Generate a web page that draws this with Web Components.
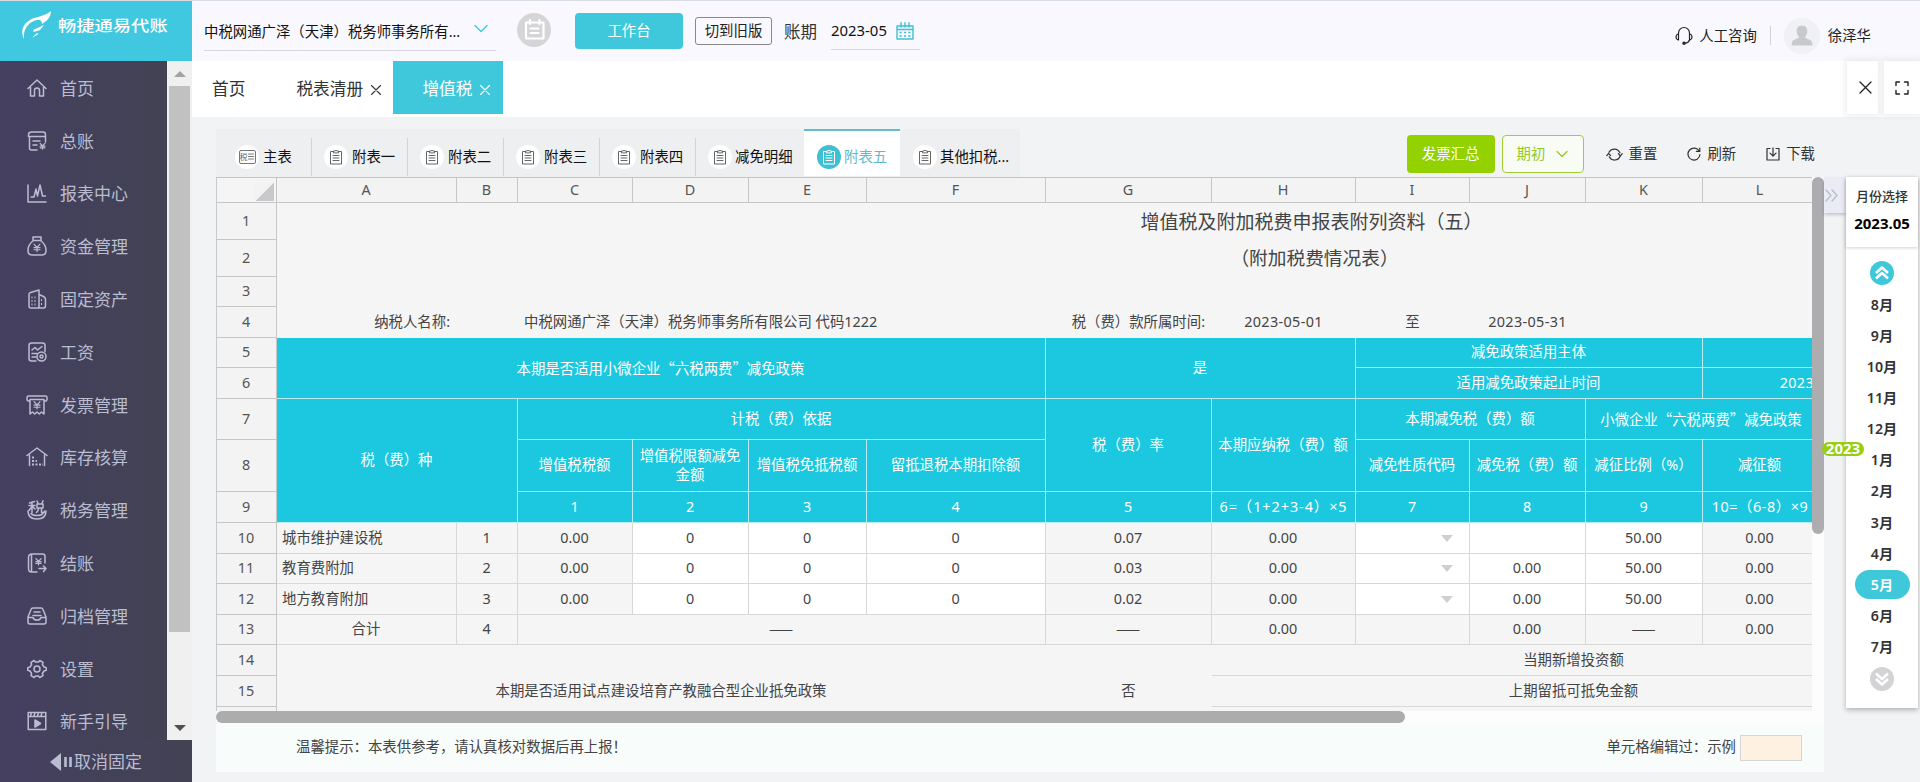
<!DOCTYPE html>
<html lang="zh-CN">
<head>
<meta charset="utf-8">
<title>畅捷通易代账</title>
<style>
html,body{margin:0;padding:0}
body{width:1920px;height:782px;overflow:hidden;background:#f2f3f5;font-family:"Noto Sans","Noto Sans CJK SC",sans-serif;font-size:14.4px;line-height:20px;color:#333}
</style>
</head>
<body>
<tax-app></tax-app>
<script>
const svg=(w,h,inner,vb)=>`<svg width="${w}" height="${h}" viewBox="${vb||`0 0 ${w} ${h}`}" fill="none" stroke="currentColor" stroke-width="1.5" stroke-linecap="round" stroke-linejoin="round">${inner}</svg>`;
const yen=(x,y,s)=>`<path d="M${x-s} ${y-s*1.1}l${s} ${s*1.1}l${s} ${-s*1.1}M${x} ${y}v${s*1.3}M${x-s} ${y+.2}h${2*s}M${x-s} ${y+s*.75}h${2*s}" stroke-width="1.2"/>`;
const ICONS={
 home:svg(20,20,'<path d="M1 10.5L10 2l9 8.5M3.5 9v9h4v-5.500a2.500 2.500 0 0 1 5 0V18h4V9"/>'),
 ledger:svg(20,20,'<path d="M18.500 11V3.500q0-2.500-2.500-2.500H5Q1.500 1 1.500 3.500V5.500h17M2.500 5.500V17q0 2 2 2h5.500M6 10h7M6 14h4"/>'+yen(15.5,15,2.4)),
 chart:svg(20,20,'<path d="M1 2v17h18M4 14h3l2-8 1.500 7L13 2l2.500 11h3"/>'),
 money:svg(20,20,'<path d="M6 1h8v3.500H6zM6.500 4.500C3 7 1 10 1 14.500q0 4.500 4 4.500h10q4 0 4-4.500C19 10 17 7 13.500 4.500"/>'+yen(10,11.5,3)),
 asset:svg(20,20,'<path d="M2 17V5.500Q2 4 3.500 3.500L12 1v18H4q-2 0-2-2zM12 5.500l4.500 2q2 1 2 3V17q0 2-2 2H12"/><path d="M4.500 8.500h6M4.500 12h6M4.500 15.500h6M14 11h3M14 15h3" stroke-dasharray="1 2" stroke-width="1.900" stroke-linecap="butt"/>'),
 wage:svg(20,20,'<path d="M18 9.500V3.500q0-2.500-2.500-2.500h-11Q2 1 2 3.500v13Q2 19 4.500 19H9M5 8l3-2.500L10.500 8 15 4.500M5 11.500h5M5 15h4"/><circle cx="14.500" cy="14.500" r="4.500"/><circle cx="14.500" cy="14.500" r="1.500"/>'),
 invoice:svg(22,20,'<path d="M4 6H2.500q-1.500 0-1.500-1.500v-2Q1 1 2.500 1h17q1.500 0 1.500 1.500v2Q21 6 19.500 6H18M4 4.500h14V19l-2.500-2-2.200 2-2.300-2-2.300 2-2.200-2L4 19z"/>'+yen(11,10,3)),
 stock:svg(22,20,'<path d="M1 8.500L11 1l10 7.500M3.500 8v10.500M18.500 8v10.500"/><path d="M6 10.500h2M6 14h5M6 17.500h11" stroke-dasharray="2 1.500" stroke-width="2" stroke-linecap="butt"/>'),
 tax:svg(20,20,'<path d="M1 11q0 8 9 8t9-8M4 13.500q1.500 2 6 2t6-2"/><path d="M2.500 3l5-1.500M5 2.500v10M2 5.500h6M5 6.500l-3 4M5.500 6.500L8 9M10 1l1 2M16 .800l-1 2.500M10 4h6v4h-6zM11.500 8q0 3-2 4.500M14.500 8v4.500h3V11" stroke-width="1.500"/>'),
 close:svg(20,20,'<path d="M18 10V3.500q0-2.500-2.500-2.500H5Q1.500 1 1.500 4.500v11Q1.500 19 4.500 19H10M4.500 1.500v17M12 15.500h7l-2.500-2.500M19 15.500L16.500 18.500"/>'+yen(11.5,8.5,2.600)),
 archive:svg(20,18,'<path d="M1 10L4 2.500Q4.500 1 6 1h8q1.500 0 2 1.500L19 10v5q0 2-2 2H3q-2 0-2-2zM1 10.500h5q.500 2.500 4 2.500t4-2.500h5M7 5h6M6 8.500h8"/>'),
 gear:svg(20,20,'<path d="M7.200 1.500L8.500 3h3l1.300-1.500 3.200 1.800-.600 2.200 1.600 2.500 2.300.700v2.600l-2.300.700-1.600 2.500.600 2.200-3.200 1.800-1.300-1.500h-3l-1.300 1.500L4 16.700l.600-2.200L3 12l-2.300-.700V8.700L3 8l1.600-2.500L4 3.300z"/><circle cx="10" cy="10" r="3"/>'),
 guide:svg(20,20,'<path d="M1.200 1.500h17.600v17H1.200zM1.200 5.500h17.600M4.500 1.500L3.500 5M8 1.500L7 5M11.500 1.500l-1 3.500M15 1.500L14 5"/><path d="M8 9l5.500 3.500L8 16z" fill="currentColor"/>'),
 clip:svg(14,16,'<path d="M4 2.500H1.500V15h11V2.500H10M4.500 3.500V2H6q1-1.800 2 0h1.500v1.500zM4 6.500h6M4 9h6M4 11.500h6" stroke-width="1"/>'),
 x:svg(10,10,'<path d="M.500.500l9 9M9.500.500l-9 9" stroke-width="1.100"/>'),
 chev:svg(14,10,'<path d="M1 1.500l6 6 6-6" stroke-width="1.300"/>'),
 chevs:svg(12,9,'<path d="M1 1.500l5 5 5-5" stroke-width="1.200"/>'),
 board:svg(34,34,'<circle cx="17" cy="17" r="17" fill="#d5d5d8" stroke="none"/><path d="M9 9.500h17.500v16H9zM13 7v4M22.500 7v4M13.500 15.500h8M13.500 20h8" stroke="#fff" stroke-width="2.200"/>'),
 cal:svg(18,18,'<path d="M1 4h16v13H1zM1 7.500h16M5 .800V5M9 .800V5M13 .800V5" stroke-width="1.400"/><path d="M3.500 10.500h11M3.500 14h11" stroke-width="1.700" stroke-dasharray="2.200 2.200" stroke-linecap="butt"/>'),
 head:svg(18,19,'<path d="M3.500 8V7a5.500 5.500 0 0 1 11 0v7q-1 3-4.500 3.200M3.500 8H3q-2 .500-2 3t2 3h.500zM14.500 8h.500q2 .500 2 3t-2 3h-.500z" stroke-width="1.200"/><circle cx="9" cy="17.200" r="1"/>'),
 full:svg(14,14,'<path d="M1 4.500V1h3.500M9.500 1H13v3.500M13 9.500V13H9.500M4.500 13H1V9.500" stroke-width="1.400"/>'),
 reset:svg(17,15,'<path d="M3 5.300a6 6 0 0 1 10.900.500M14.200 9a6 6 0 0 1-11 .800M.800 8.600L2.600 6.300l2 2.300M12.400 6.700l2 2.300 1.800-2.300" stroke-width="1.200"/>'),
 refresh:svg(14,14,'<path d="M12.300 4.200A6 6 0 1 0 13 7.500M12.800 1v3.400H9.400" stroke-width="1.200"/>'),
 down:svg(14,14,'<path d="M4 1.500H1V13h12V1.500h-3M7 .800V9M4 6.200l3 3 3-3" stroke-width="1.200"/>')
};
class Base extends HTMLElement{
 constructor(){super();this.attachShadow({mode:'open'})}
 connectedCallback(){this.shadowRoot.innerHTML=`<style>*{box-sizing:border-box}svg{display:block;flex:none}${this.css()}</style>${this.html()}`}
 css(){return ''} html(){return ''}
}
const def=(n,css,html)=>customElements.define(n,class extends Base{css(){return typeof css==='function'?css(this):css}html(){return typeof html==='function'?html(this):html}});

def('ui-icon',':host{display:flex;align-items:center;justify-content:center}',e=>ICONS[e.getAttribute('name')]);

def('menu-item',`:host{display:flex;align-items:center;height:52.800px;padding:1px 0 0 26px;font-size:17px;color:#babdd1}ui-icon{width:22px;margin:-2px 12px 0 0}`,
 e=>`<ui-icon name="${e.getAttribute('icon')}"></ui-icon><slot></slot>`);

def('side-bar',`:host{display:flex;flex-direction:column;width:192px;height:782px;color:#babdd1}
.logo{height:61px;background:#3fc8e0;color:#fff;display:flex;padding:10px 0 0 21px;border-top:1px solid #d8dce4}
.logo span{font-size:18.300px;line-height:28px;height:28px;margin-left:6px;white-space:nowrap;transform:scaleY(.83);font-weight:500}
.mid{display:flex;height:679px;background:#f0f0f0}
.menu{width:167px;overflow:hidden;padding-top:1px;background:linear-gradient(90deg,#453f60,#43415a 50%,#424253)}
.bar{width:25px;display:flex;flex-direction:column;align-items:center}
.up,.dn{height:25px;display:flex;align-items:center}
.up:before,.dn:before{content:"";border:6px solid transparent;border-top:0;border-bottom:6px solid #a3a3a3}
.dn:before{border-top:6px solid #505050;border-bottom:0}
.thumb{width:21px;height:546px;background:#c1c1c1;margin-bottom:83px}
.foot{height:42px;background:linear-gradient(90deg,#453f60,#43415a 50%,#424253);display:flex;align-items:center;padding:2px 0 0 50px;font-size:17px}`,
`<div class="logo">${svg(31,31,'<path d="M3 28C-3 16 7 8 17 6 24 4 28 2 30 0c0 6-4 10-9 13 0-3-2-5-5-4C8 11 2 17 3 28zM12 19l11-5-4 5-6 2zM11 27l5-5 1.500 1z" fill="#fff" stroke="none"/>')}<span>畅捷通易代账</span></div>
<div class="mid"><div class="menu">${[['home','首页'],['ledger','总账'],['chart','报表中心'],['money','资金管理'],['asset','固定资产'],['wage','工资'],['invoice','发票管理'],['stock','库存核算'],['tax','税务管理'],['close','结账'],['archive','归档管理'],['gear','设置'],['guide','新手引导']].map(a=>`<menu-item icon="${a[0]}">${a[1]}</menu-item>`).join('')}</div>
<div class="bar"><div class="up"></div><div class="thumb"></div><div class="dn"></div></div></div>
<div class="foot">${svg(24,18,'<path d="M0 9L11 0v18z" fill="currentColor" stroke="none"/><path d="M15.500 4v10M20.500 4v10" stroke-width="2.600" stroke-linecap="butt"/>')}取消固定</div>`);

def('top-bar',`:host{display:flex;height:61px;background:#f8f8fe;border-top:1px solid #d8dce4;color:#222;padding:0 49px 0 12px}
.co{width:292px;height:50px;border-bottom:1px solid #d5d8dd;display:flex;align-items:center;padding:13px 8px 0 0;justify-content:space-between;white-space:nowrap;color:#111}
.co ui-icon{color:#3fc8e0;margin-top:-7px}
.board{margin:0 0 0 21px;height:58px}
.work{width:108px;height:36px;margin:12px 0 0 24px;border-radius:4px;background:#3fc8dc;color:#fff;text-align:center;line-height:35px}
.old{width:77px;height:28px;margin:16px 0 0 12px;border:1px solid #888;border-radius:3px;text-align:center;line-height:25px}
.lab{font-size:16.500px;margin:21px 0 0 12px;width:47px;color:#333}
.date{width:89px;height:49px;border-bottom:1px solid #d5d8dd;display:flex;padding:19px 6px 0 0;justify-content:space-between;font-size:14.900px;color:#111}
.date ui-icon{color:#3fc0d2;height:21px}
.r{margin-left:auto;display:flex;align-items:center;height:69px}
.r .l{width:1px;height:19px;background:#cfd2d8;margin:0 13px 0 13px}`,
`<div class="co"><span>中税网通广泽（天津）税务师事务所有...</span><ui-icon name="chev"></ui-icon></div><ui-icon class="board" name="board"></ui-icon><div class="work">工作台</div><div class="old">切到旧版</div><div class="lab">账期</div><div class="date"><span>2023-05</span><ui-icon name="cal"></ui-icon></div>
<div class="r"><ui-icon name="head"></ui-icon><span style="margin-left:6px">人工咨询</span><i class="l"></i>${svg(36,36,'<circle cx="18" cy="18" r="18" fill="#f0f1f4"/><path d="M18 7.500c4 0 5.500 3 5.300 6-.200 3-1.500 4-2 5v1.500l5 2q2 1 2.200 5.500h-21q.200-4.500 2.200-5.500l5-2V18.500c-.500-1-1.800-2-2-5-.200-3 1.300-6 5.300-6z" fill="#c8c9cc"/>').replace('stroke="currentColor"','stroke="none"')}<span style="margin-left:8px">徐泽华</span></div>`);

def('page-tabs',`:host{display:flex;height:56px;background:#fff;font-size:16.700px;color:#333}
div{height:53px;display:flex;align-items:center;padding-top:3px}ui-icon{margin-top:2px}
.a{background:#3fc8dc;color:#fff;width:110px;padding-left:29px;margin-left:12px;gap:8px}
.b{margin-left:51px;width:85px;gap:8px}.h{margin-left:20px}
.btn{justify-content:center;padding:0;width:31px;box-shadow:0 0 6px 2px rgba(0,0,0,.07);color:#222}.btn ui-icon{margin:0}`,
`<div class="h">首页</div><div class="b">税表清册<ui-icon name="x"></ui-icon></div><div class="a">增值税<ui-icon name="x"></ui-icon></div>
<div class="btn" style="margin-left:auto;padding-left:6px">${svg(13,13,'<path d="M1 1l11 11M12 1L1 12" stroke-width="1.300"/>')}</div><div class="btn" style="margin-left:6px;width:36px"><ui-icon name="full"></ui-icon></div>`);

def('sheet-tab',`:host{display:flex;align-items:center;width:96px;height:47px;gap:4px;padding-left:12px;color:#111;white-space:nowrap;background:linear-gradient(#d3d4d5,#d3d4d5) right bottom/1px 38px no-repeat;padding-top:8px}
:host([plain]){background:none}
:host([active]){background:#fff;color:#5fbccd;border-top:2px solid #60bcd0;padding-top:6px}
.c{width:24px;height:24px;border-radius:50%;background:#fff;color:#666;display:flex;align-items:center;justify-content:center}
:host([active]) .c{background:#3fc0d2;color:#fff}
.t{width:17px;height:14px;border:1px solid #777;border-radius:2px;font-size:8px;line-height:12px;display:flex;align-items:center;gap:1px;flex:none;letter-spacing:-1px}`,
 e=>`<span class="c">${e.hasAttribute('main')?'<span class="t">税'+svg(6,7,'<path d="M.500 1h5M.500 3.500h5M.500 6h5" stroke-width=".900"/>')+'</span>':ICONS.clip}</span><slot></slot>`);

def('tool-bar',`:host{display:flex;height:60px;padding:12px 104px 0 24px}
.tabs{display:flex;width:804px;height:48px;background:#eeeff0}
.act{margin-left:auto;display:flex;align-items:center;height:50px;color:#333}
.g{width:88px;height:38px;border-radius:4px;background:#93d200;color:#fff;text-align:center;line-height:38px}
.o{width:82px;height:38px;border-radius:4px;border:1px solid #9ed032;background:#f8fcf5;color:#93c91e;display:flex;align-items:center;gap:11px;margin:0 22px 0 7px;padding-left:14px}`,
`<div class="tabs"><sheet-tab main style="padding-left:19px">主表</sheet-tab><sheet-tab>附表一</sheet-tab><sheet-tab>附表二</sheet-tab><sheet-tab>附表三</sheet-tab><sheet-tab>附表四</sheet-tab><sheet-tab plain style="width:108px;gap:3px">减免明细</sheet-tab><sheet-tab active style="padding-left:13px;gap:3px">附表五</sheet-tab><sheet-tab plain style="width:120px;padding-left:13px;gap:3px">其他扣税...</sheet-tab></div>
<div class="act"><div class="g">发票汇总</div><div class="o">期初<ui-icon name="chevs"></ui-icon></div><ui-icon name="reset"></ui-icon><span style="margin:0 30px 0 6px">重置</span><ui-icon name="refresh"></ui-icon><span style="margin:0 30px 0 6px">刷新</span><ui-icon name="down"></ui-icon><span style="margin:0 1px 0 6px">下载</span></div>`);

/* cell: [row, col, text, rowspan, colspan, classes]; column 1 is the row header */
const cells=[];
const put=(r,c,t,rs=1,cs=1,k='')=>cells.push(`<div class="${k}" style="grid-area:${r}/${c}/span ${rs}/span ${cs}">${t}</div>`);
put(1,1,'',1,1,'h corner');
'ABCDEFGHIJKL'.split('').forEach((l,i)=>put(1,i+2,l,1,1,'h'));
put(1,14,'',1,2,'h');
for(let i=1;i<=15;i++)put(i+1,1,i,1,1,'h');
put(17,1,'',1,1,'h');
put(2,2,'增值税及附加税费申报表附列资料（五）',1,14,'n t q');
put(3,2,'（附加税费情况表）',1,14,'n t t2 q');
put(5,2,'纳税人名称:',1,1,'n r');put(5,4,'中税网通广泽（天津）税务师事务所有限公司 代码1222',1,4,'n l');
put(5,8,'税（费）款所属时间:',1,1,'n r');put(5,9,'2023-05-01',1,1,'n s');put(5,10,'至',1,1,'n');put(5,11,'2023-05-31',1,1,'n s');
put(6,2,'本期是否适用小微企业“六税两费”减免政策',2,6,'b q');put(6,8,'是',2,2,'b');
put(6,10,'减免政策适用主体',1,3,'b');put(6,13,'',1,2,'b');put(7,10,'适用减免政策起止时间',1,3,'b');put(7,13,'2023-01-01',1,2,'b s');
put(8,2,'税（费）种',3,2,'b');put(8,4,'计税（费）依据',1,4,'b');put(8,8,'税（费）率',2,1,'b');put(8,9,'本期应纳税（费）额',2,1,'b');
put(8,10,'本期减免税（费）额',1,2,'b');put(8,12,'小微企业“六税两费”减免政策',1,2,'b q');
['增值税税额','增值税限额减免金额','增值税免抵税额','留抵退税本期扣除额'].forEach((t,i)=>put(9,4+i,t,1,1,'b'));
put(9,10,'减免性质代码',1,1,'b');put(9,11,'减免税（费）额',1,1,'b');put(9,12,'减征比例（%）',1,1,'b');put(9,13,'减征额',1,1,'b');
['1','2','3','4','5','6=（1+2+3-4）×5','7','8','9','10=（6-8）×9'].forEach((t,i)=>put(10,4+i,t,1,1,'b'+(i==5?' f':i==9?' f2':'')));
[['城市维护建设税','0.07',''],['教育费附加','0.03','0.00'],['地方教育附加','0.02','0.00']].forEach((a,i)=>{const r=11+i;
 put(r,2,a[0],1,1,'l');put(r,3,i+1);put(r,4,'0.00');for(let c=5;c<8;c++)put(r,c,'0',1,1,'w');
 put(r,8,a[1]);put(r,9,'0.00');put(r,10,'<i></i>',1,1,'w dd');put(r,11,a[2],1,1,'w');put(r,12,'50.00',1,1,'w');put(r,13,'0.00')});
put(14,2,'合计');put(14,3,'4');put(14,4,'——',1,4,'q');put(14,8,'——',1,1,'q');put(14,9,'0.00');put(14,10,'');put(14,11,'0.00');put(14,12,'——',1,1,'q');put(14,13,'0.00');
put(15,2,'本期是否适用试点建设培育产教融合型企业抵免政策',3,6,'n');put(15,8,'否',3,1,'n');
put(15,9,'当期新增投资额',1,6);put(16,9,'上期留抵可抵免金额',1,6);

def('tax-sheet',`:host{display:grid;grid-template:534px 12px/1596px 12px;width:1608px;height:546px;background:#fdfdfd}
.view{overflow:hidden;border-left:1px solid #c9c9c9;border-top:1px solid #c4c4c4;background:#f5f5f6}
.grid{display:grid;width:2139px;grid-template-columns:60px 180px 61px 115px 116px 118px 179px 166px 144px 114px 116px 117px 115px 119px 419px;
grid-template-rows:25px 37px 37px 30px 31px 30px 31px 41px 52px 31px 31px 30px 31px 30px 31px 31px 31px}
.grid>div{border-right:1px solid #d8d8d9;border-bottom:1px solid #d8d8d9;display:flex;align-items:center;justify-content:center;text-align:center;padding:0 5px 2px 4px;line-height:19px;min-width:0;color:#444}
.grid>.h{background:#f3f3f4;border-color:#c6c6c6;color:#555;padding-bottom:2px}
.grid>.n{border:0;white-space:nowrap;padding-bottom:3px}.grid>.t{font-size:19px;line-height:28px;padding:0 10px 2px 0}.grid>.t2{font-size:18.700px;padding:0 4px 4px 0}
.q{font-family:"Noto Sans CJK SC",sans-serif}
.grid>.r{justify-content:flex-end;padding-right:7px}.grid>.l{justify-content:flex-start;padding-left:5px}.grid>.n.l{padding-left:6px}
.grid>.b{background:#1cc8df;color:#fff;border-color:#bcebf2}
.grid>.w{background:#fff}
.grid>.s{letter-spacing:.35px}
.grid>.f,.grid>.f2{white-space:nowrap;letter-spacing:.95px;padding:0 0 2px}.grid>.f2{letter-spacing:.55px}
.grid>.corner{background:linear-gradient(135deg,#f3f3f4 50%,#c9c8ca 50.500%) right 2px bottom 1px/19px 19px no-repeat}
.grid>.dd{justify-content:flex-end;padding:0 16px 0 0}
.dd i{border:6px solid transparent;border-top:7px solid #cfcfcf;border-bottom:0}
.v i{display:block;height:357px;background:#adacae;border-radius:6px}
.x{grid-column:1/3}.x i{display:block;width:1189px;height:12px;background:#adacad;border-radius:6px}`,
`<div class="view"><div class="grid">${cells.join('')}</div></div><div class="v"><i></i></div><div class="x"><i></i></div>`);

def('sheet-foot',`:host{display:flex;width:1608px;height:49px;background:#f8fdfc;align-items:center;padding:0 22px 0 80px;color:#444}
span{margin-top:-1px}span+span{margin-left:auto}i{width:62px;height:26px;background:#fef1e2;border:1px solid #d5d6d5;margin-left:4px}`,
`<span>温馨提示：本表供参考，请认真核对数据后再上报！</span><span>单元格编辑过：示例</span><i></i>`);

const dbl=(c,up)=>svg(24,24,`<circle cx="12" cy="12" r="12" fill="${c}" stroke="none"/><path d="${up?'M6 12L12 6.500l6 5.500M6 17.500L12 12l6 5.500':'M6 6.500L12 12l6-5.500M6 12L12 17.500l6-5.500'}" stroke="#fff" stroke-width="2.500" stroke-linecap="butt"/>`);
def('month-panel',`:host{display:flex;width:96px;align-items:flex-start}
.tog{width:22px;height:36px;background:#ebebf5;box-shadow:0 2px 3px rgba(0,0,0,.18);display:flex;align-items:center;justify-content:center;color:#b5b8c8;padding-right:8px}
.p{position:relative;width:72px;height:531px;background:#fff;box-shadow:0 2px 5px rgba(0,0,0,.28);display:flex;flex-direction:column;align-items:center}
.t{height:70px;width:72px;text-align:center;padding-top:9px;font-size:13px;font-weight:500;box-shadow:0 1px 3px rgba(0,0,0,.18);white-space:nowrap}
.t b{display:block;font-size:15px;margin-top:7px;color:#000}
.m{width:55px;height:31.150px;display:flex;align-items:center;justify-content:center;font-weight:600;font-size:14.200px;color:#333}
.m.on span{background:#3fc8da;color:#fff;border-radius:15px;width:55px;line-height:29px;text-align:center}
.tag{position:absolute;left:-24px;top:265px;width:42px;height:14px;border-radius:7px;background:#97cd12;color:#fff;font-weight:700;font-size:15px;line-height:13px;text-align:center}`,
`<div class="tog">${svg(13,13,'<path d="M1 1l5 5.500L1 12M7 1l5 5.500L7 12" stroke-width="1.200"/>')}</div><div class="p"><div class="t">月份选择<b>2023.05</b></div><div style="margin:14px 0 4px">${dbl('#3fc8da',1)}</div>${[8,9,10,11,12,1,2,3,4,5,6,7].map(n=>`<div class="m${n==5?' on':''}"><span>${n}月</span></div>`).join('')}<div style="margin-top:4px">${dbl('#d3d3d5')}</div><span class="tag">2023</span></div>`);

def('tax-app',`:host{display:grid;grid-template-columns:192px 1728px;height:782px}
main{display:flex;flex-direction:column;min-width:0}.body{display:flex;padding-left:24px}`,
`<side-bar></side-bar><main><top-bar></top-bar><page-tabs></page-tabs><tool-bar></tool-bar><div class="body"><div><tax-sheet></tax-sheet><sheet-foot></sheet-foot></div><month-panel></month-panel></div></main>`);
</script>
</body>
</html>
